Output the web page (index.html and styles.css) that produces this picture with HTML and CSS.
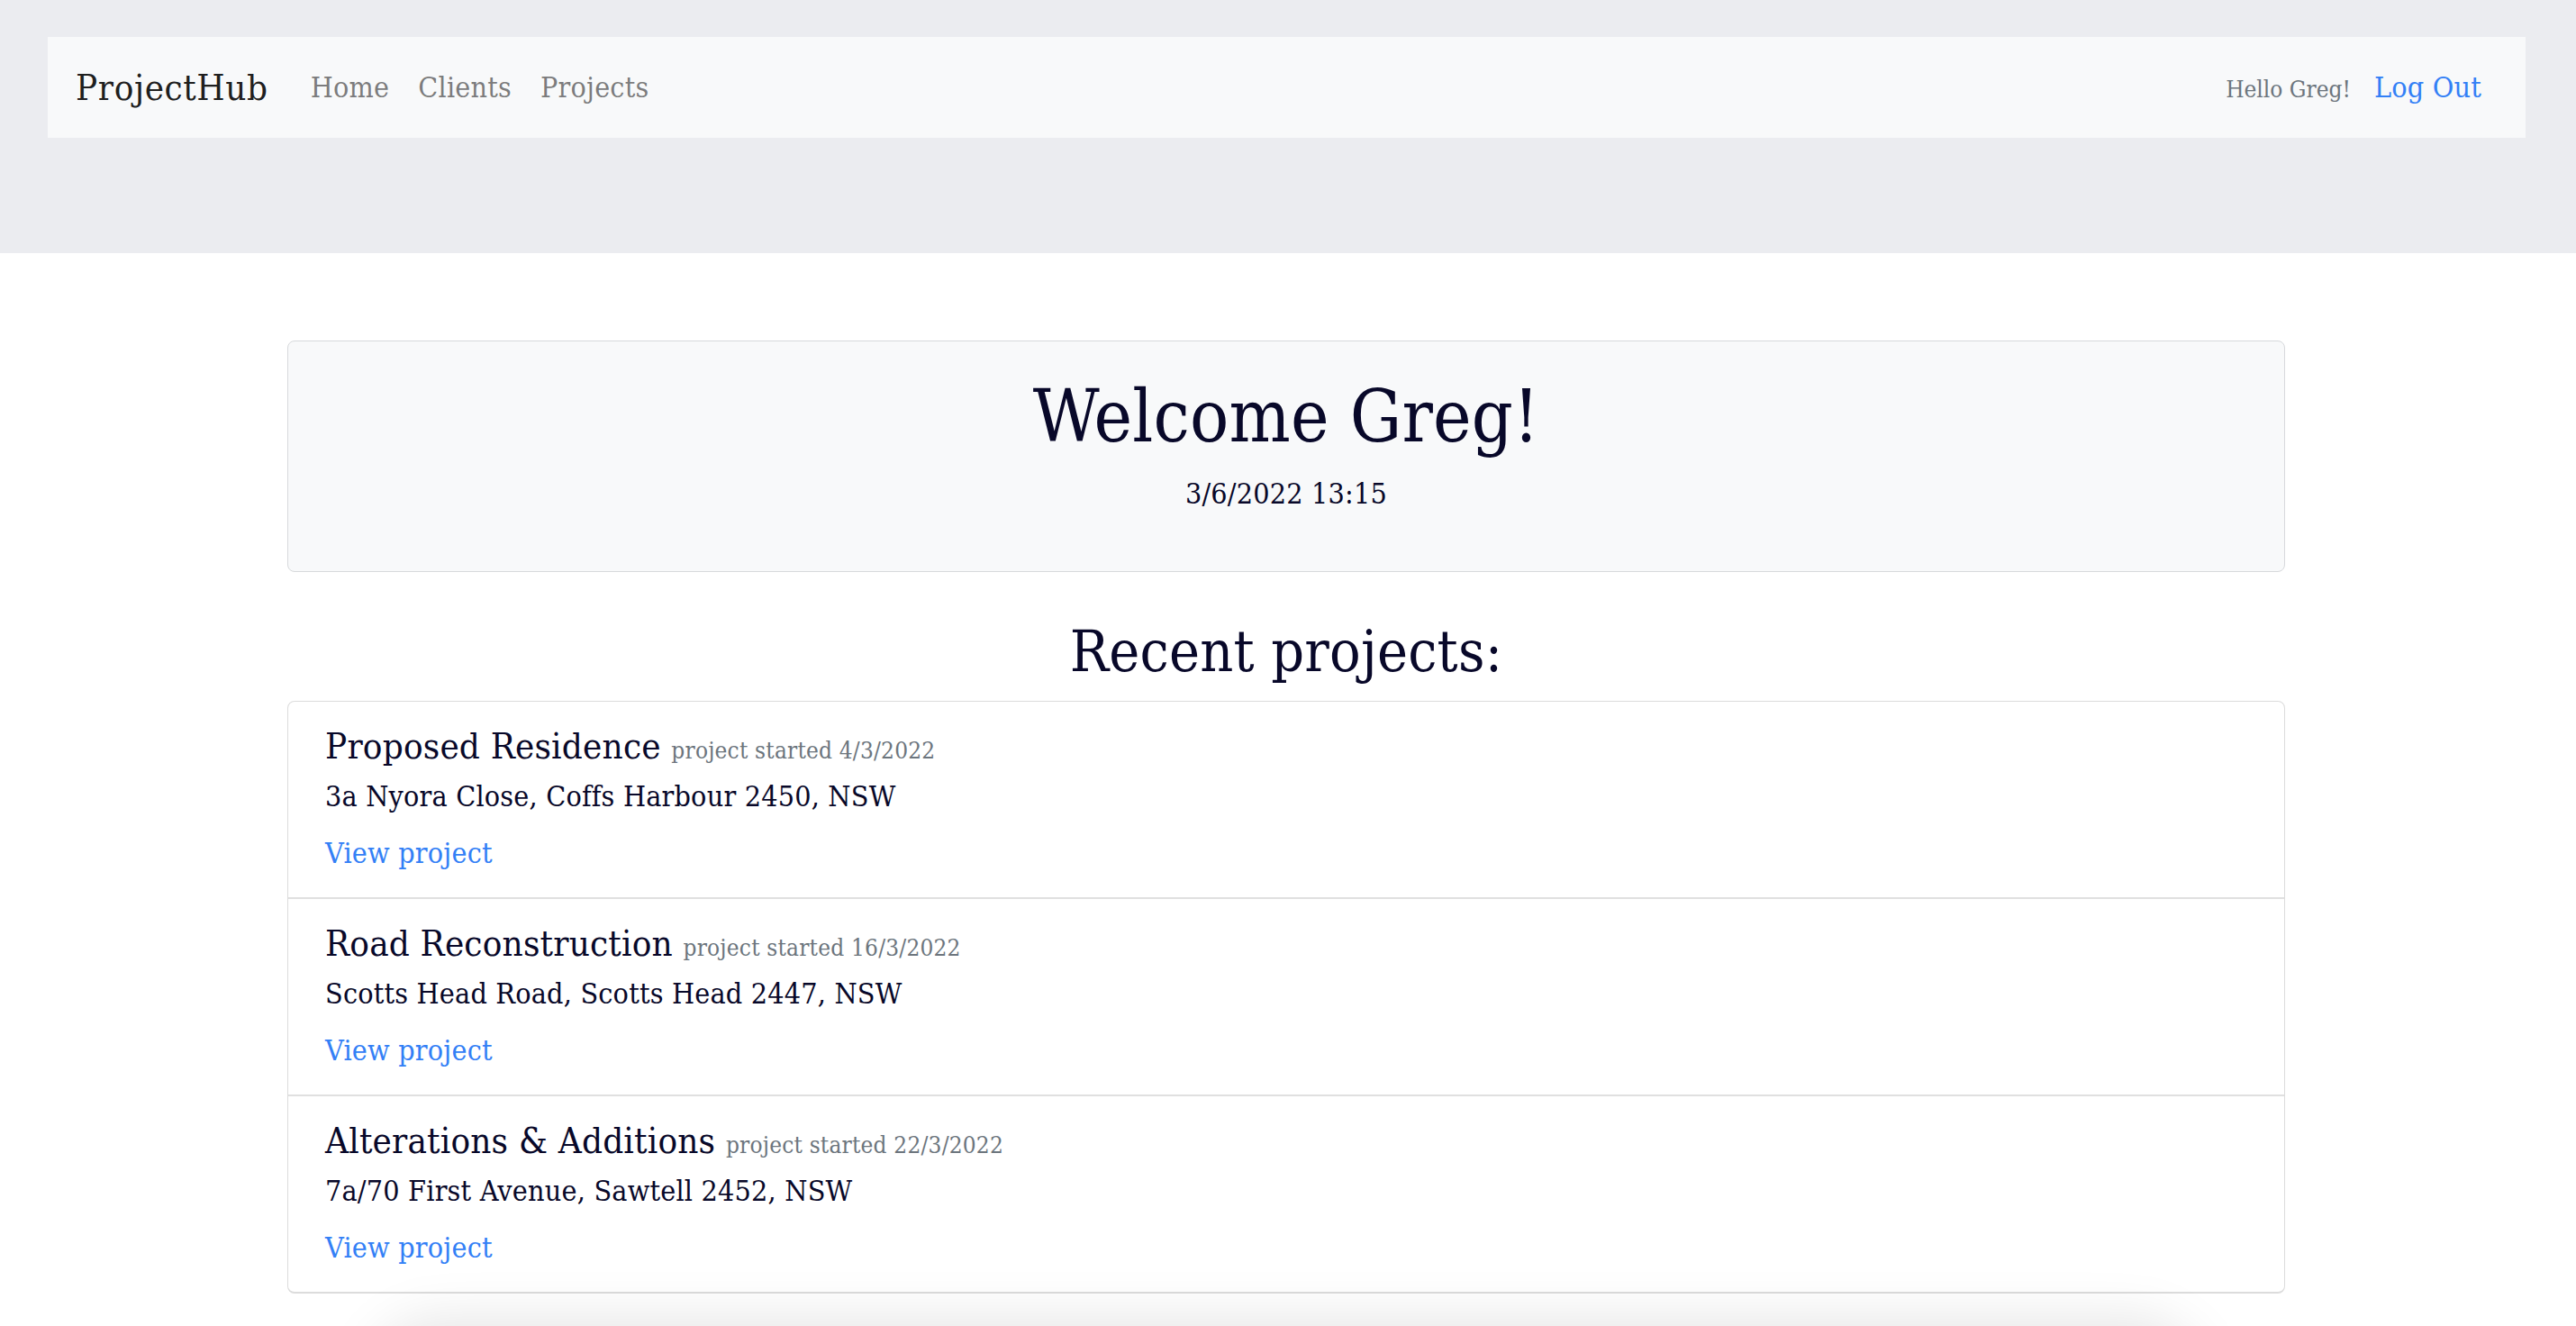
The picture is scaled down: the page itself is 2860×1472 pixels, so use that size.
FILE: index.html
```html
<!DOCTYPE html>
<html lang="en">
<head>
<meta charset="utf-8">
<title>ProjectHub</title>
<link rel="stylesheet" href="styles.css">
</head>
<body>
<header class="top">
  <nav class="navbar">
    <a class="brand" href="#">ProjectHub</a>
    <ul class="nav-links">
      <li><a href="#">Home</a></li>
      <li><a href="#">Clients</a></li>
      <li><a href="#">Projects</a></li>
    </ul>
    <div class="nav-user">
      <span class="hello">Hello Greg!</span>
      <a class="logout" href="#">Log Out</a>
    </div>
  </nav>
</header>
<main class="container">
  <section class="welcome">
    <h1 class="welcome-title">Welcome Greg!</h1>
    <p class="welcome-date">3/6/2022 13:15</p>
  </section>
  <h2 class="section-title">Recent projects:</h2>
  <ul class="project-list">
    <li class="project">
      <div class="project-head"><span class="project-title">Proposed Residence</span> <small class="project-date">project started 4/3/2022</small></div>
      <div class="project-addr">3a Nyora Close, Coffs Harbour 2450, NSW</div>
      <a class="project-link" href="#">View project</a>
    </li>
    <li class="project">
      <div class="project-head"><span class="project-title">Road Reconstruction</span> <small class="project-date">project started 16/3/2022</small></div>
      <div class="project-addr">Scotts Head Road, Scotts Head 2447, NSW</div>
      <a class="project-link" href="#">View project</a>
    </li>
    <li class="project">
      <div class="project-head"><span class="project-title">Alterations &amp; Additions</span> <small class="project-date">project started 22/3/2022</small></div>
      <div class="project-addr">7a/70 First Avenue, Sawtell 2452, NSW</div>
      <a class="project-link" href="#">View project</a>
    </li>
  </ul>
  <div class="footer-shadow"></div>
</main>
</body>
</html>
```
FILE: styles.css
```css
html, body {
  margin: 0;
  padding: 0;
  background: #ffffff;
}
body {
  font-family: "DejaVu Serif", "Liberation Serif", serif;
  font-stretch: condensed;
  letter-spacing: 0.012em;
  color: #080829;
  overflow: hidden;
}
a { text-decoration: none; }

.top {
  background: #ebecf0;
  padding: 41px 56px 128px 53px;
}
.navbar {
  height: 112px;
  background: #f8f9fa;
  display: flex;
  align-items: center;
  padding: 0 49px 0 31px;
}
.brand {
  font-size: 40px;
  line-height: 60px;
  letter-spacing: 0.015em;
  color: rgba(0, 0, 0, 0.9);
  margin-right: 47px;
}
.nav-links {
  list-style: none;
  margin: 0;
  padding: 0;
  display: flex;
  gap: 32px;
}
.nav-links a {
  font-size: 32px;
  line-height: 48px;
  color: rgba(0, 0, 0, 0.52);
}
.nav-user {
  margin-left: auto;
  display: flex;
  align-items: baseline;
  gap: 26px;
}
.hello {
  font-size: 26px;
  letter-spacing: 0;
  color: #6c757d;
}
.logout {
  font-size: 32px;
  line-height: 48px;
  color: #3380f6;
}

.container {
  width: 2218px;
  margin: 97px 0 0 319px;
}
.welcome {
  background: #f8f9fa;
  border: 1px solid #d7d9dc;
  border-radius: 8px;
  padding: 36px 0 62px;
  text-align: center;
}
.welcome-title {
  margin: 0;
  font-size: 80px;
  line-height: 96px;
  font-weight: normal;
}
.welcome-date {
  margin: 13px 0 0;
  font-size: 32px;
  line-height: 48px;
}
.section-title {
  margin: 50px 0 16px;
  text-align: center;
  font-size: 64px;
  line-height: 77px;
  font-weight: normal;
}
.project-list {
  list-style: none;
  margin: 0;
  padding: 0;
  border: 1px solid #dcdcdc;
  border-bottom-width: 2px;
  border-radius: 8px;
}
.project {
  padding: 25px 41px 25px 41px;
  display: flex;
  flex-direction: column;
  align-items: flex-start;
}
.project + .project {
  border-top: 2px solid #e0e0e0;
}
.project-head {
  font-size: 40px;
  line-height: 48px;
}
.project-date {
  font-size: 26px;
  line-height: 1;
  color: #6c757d;
}
.project-addr {
  margin-top: 8px;
  font-size: 32px;
  line-height: 48px;
}
.project-link {
  margin-top: 15px;
  font-size: 32px;
  line-height: 48px;
  color: #3380f6;
}
.footer-shadow {
  width: 2000px;
  height: 120px;
  margin: 48px auto 0;
  background: #e4e4e4;
  box-shadow: 0 0 60px 20px rgba(0, 0, 0, 0.1);
  border-radius: 60px;
}
```
